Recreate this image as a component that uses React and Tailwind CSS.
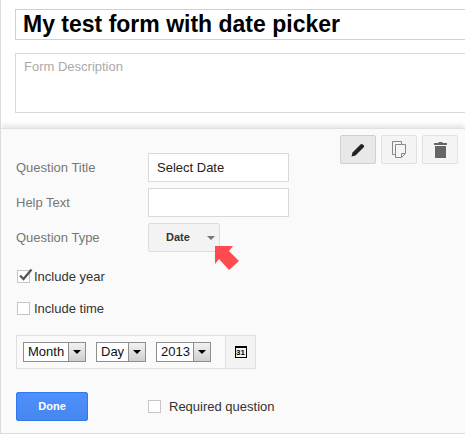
import React from 'react';

const labelClass = "w-[132px] text-[13px] text-[#777]";
const inputClass = "block w-[141px] h-[29px] border border-[#d9d9d9] bg-white px-2 text-[13px] text-[#222] outline-none";

function PencilIcon() {
    return (
        <svg width="14" height="14" viewBox="0 0 14 14">
            <path d="M0.5 13.5 L1.5 9.5 L9.5 1.5 Q10.5 0.5 11.5 1.2 L12.8 2.5 Q13.5 3.5 12.5 4.5 L4.5 12.5 Z" fill="#222" />
        </svg>
    );
}

function CopyIcon() {
    return (
        <svg width="14" height="17" viewBox="0 0 14 17" fill="none" stroke="#888" strokeWidth="1">
            <path d="M3.5 13.5 H0.5 V0.5 H9.5 V3.5" />
            <path d="M3.5 3.5 H13.5 V12.5 L9.5 16.5 H3.5 Z" fill="#f5f5f5" />
            <path d="M9.5 16 V12.5 H13" />
        </svg>
    );
}

function TrashIcon() {
    return (
        <svg width="13" height="16" viewBox="0 0 13 16">
            <path d="M4.5 0 H8.5 V1 H13 V3 H0 V1 H4.5 Z" fill="#666" />
            <path d="M1 4 H12 V16 H1 Z" fill="#666" />
        </svg>
    );
}

function Checkbox({ checked }) {
    return (
        <span className="relative block w-[13px] h-[13px] border border-[#c6c6c6] bg-white shrink-0">
            {checked && (
                <svg className="absolute left-[0px] top-[-3px]" width="16" height="14" viewBox="0 0 16 14">
                    <path d="M2 7.5 L5.5 11 L13.5 1.5" fill="none" stroke="#555" strokeWidth="2.2" />
                </svg>
            )}
        </span>
    );
}

function FakeSelect({ label, width }) {
    return (
        <div className={`flex h-[20px] border border-[#8e8e8e] bg-white ${width}`}>
            <span className="flex-1 pl-[4px] text-[13px] leading-[18px] text-[#111]">{label}</span>
            <span className="flex items-center justify-center w-[17px] border-l border-[#8e8e8e] bg-gradient-to-b from-[#f2f2f2] to-[#cfcfcf]">
                <span className="block w-0 h-0 border-x-[4px] border-x-transparent border-t-[4px] border-t-black" />
            </span>
        </div>
    );
}

export default function App() {
    return (
        <div className="w-[465px] h-[434px] overflow-hidden border-l border-[#dcdcdc] bg-white font-['Liberation_Sans',Arial,sans-serif]">
            <div className="pl-[14px] pt-[9px] h-[128px]">
                <div className="h-[31px] border border-r-0 border-[#d0d0d0] pl-[7px] text-[23px] font-bold leading-[29px] text-black">
                    My test form with date picker
                </div>
                <div className="mt-[13px] h-[60px] border border-r-0 border-[#d9d9d9] pl-[8px] pt-[4px] text-[13px] leading-[18px] text-[#aaa]">
                    Form Description
                </div>
            </div>

            <div className="relative h-[306px] border-t border-b border-b-[#dcdcdc] border-t-[#e0e0e0] bg-[#fafafa] shadow-[0_-3px_5px_rgba(0,0,0,0.1)] pl-[15px]">
                <div className="absolute right-[7px] top-[6px] flex gap-[5px]">
                    <button className="flex items-center justify-center w-[36px] h-[29px] rounded-[2px] border border-[#cfcfcf] bg-[#e8e8e8]"><PencilIcon /></button>
                    <button className="flex items-center justify-center w-[36px] h-[29px] rounded-[2px] border border-[#e2e2e2] bg-[#f4f4f4]"><CopyIcon /></button>
                    <button className="flex items-center justify-center w-[36px] h-[29px] rounded-[2px] border border-[#e2e2e2] bg-[#f4f4f4]"><TrashIcon /></button>
                </div>

                <div className="pt-[24px] flex flex-col gap-[6px]">
                    <div className="flex items-center">
                        <label className={labelClass}>Question Title</label>
                        <div className={`${inputClass} leading-[27px]`}>Select Date</div>
                    </div>
                    <div className="flex items-center">
                        <label className={labelClass}>Help Text</label>
                        <div className={inputClass} />
                    </div>
                    <div className="flex items-center">
                        <label className={labelClass}>Question Type</label>
                        <div className="relative flex items-center w-[72px] h-[29px] rounded-[2px] border border-[#dcdcdc] bg-[#f3f3f3]">
                            <span className="ml-[17px] text-[11px] font-bold text-[#333]">Date</span>
                            <span className="absolute right-[4px] top-[12px] block w-0 h-0 border-x-[4px] border-x-transparent border-t-[4px] border-t-[#777]" />
                            <svg className="absolute left-[65px] top-[21px]" width="27" height="26" viewBox="0 0 27 26">
                                <path d="M1 1 L19 1 L15 6 L25 16 L15 25 L5 14 L1 19 Z" fill="#ff4a4f" />
                            </svg>
                        </div>
                    </div>
                </div>

                <div className="mt-[15px] ml-[1px] flex items-center gap-[4px] text-[13px] text-[#333]">
                    <Checkbox checked />
                    <span>Include year</span>
                </div>
                <div className="mt-[12px] ml-[1px] flex items-center gap-[4px] text-[13px] text-[#333]">
                    <Checkbox />
                    <span>Include time</span>
                </div>

                <div className="mt-[17px] flex items-stretch w-[240px] h-[34px] border border-[#e0e0e0]">
                    <div className="flex flex-1 items-center gap-[10px] pl-[6px]">
                        <FakeSelect label="Month" width="w-[63px]" />
                        <FakeSelect label="Day" width="w-[50px]" />
                        <FakeSelect label="2013" width="w-[55px]" />
                    </div>
                    <div className="flex items-center justify-center w-[30px] border-l border-[#e0e0e0] bg-[#f3f3f3]">
                        <span className="block w-[12px] h-[12px] border border-black border-t-[2px] text-[8px] leading-[9px] font-bold text-center text-black">31</span>
                    </div>
                </div>

                <div className="mt-[23px] flex items-center">
                    <button className="w-[72px] h-[29px] rounded-[2px] border border-[#3079ed] bg-gradient-to-b from-[#4d90fe] to-[#4787ed] text-[11px] font-bold text-white">Done</button>
                    <span className="ml-[60px] flex items-center gap-[8px] text-[13px] text-[#333]">
                        <Checkbox />
                        <span>Required question</span>
                    </span>
                </div>
            </div>
        </div>
    );
}
